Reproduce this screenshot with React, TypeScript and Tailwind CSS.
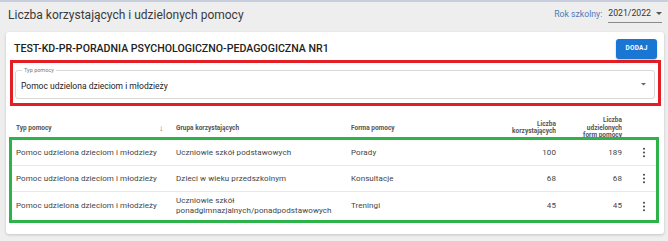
import React from "react";

interface Row {
  id: number;
  typ: string;
  grupa: string[];
  forma: string;
  korzystajacych: number;
  udzielonych: number;
  height: string;
}

const rows: Row[] = [
  { id: 1, typ: "Pomoc udzielona dzieciom i młodzieży", grupa: ["Uczniowie szkół podstawowych"], forma: "Porady", korzystajacych: 100, udzielonych: 189, height: "h-[26px]" },
  { id: 2, typ: "Pomoc udzielona dzieciom i młodzieży", grupa: ["Dzieci w wieku przedszkolnym"], forma: "Konsultacje", korzystajacych: 68, udzielonych: 68, height: "h-[26px]" },
  { id: 3, typ: "Pomoc udzielona dzieciom i młodzieży", grupa: ["Uczniowie szkół", "ponadgimnazjalnych/ponadpodstawowych"], forma: "Treningi", korzystajacych: 45, udzielonych: 45, height: "h-[28px]" },
];

const cols = "grid grid-cols-[160px_175px_143px_70px_66px_30px]";

function Caret({ className }: { className?: string }) {
  return (
    <svg viewBox="0 0 10 5" className={className}>
      <path d="M0 0 L10 0 L5 5 Z" fill="currentColor" />
    </svg>
  );
}

function Kebab() {
  return (
    <svg viewBox="0 0 4 11" className="w-[4px] h-[11px]">
      <circle cx="2" cy="1.8" r="1.05" fill="#4a4a4a" />
      <circle cx="2" cy="5.5" r="1.05" fill="#4a4a4a" />
      <circle cx="2" cy="9.2" r="1.05" fill="#4a4a4a" />
    </svg>
  );
}

export default function App() {
  return (
    <div className="w-[668px] h-[241px] overflow-hidden bg-[#eeeeee] border-t-2 border-[#c7cfdf] font-['Roboto',sans-serif]">
      {/* Page header */}
      <div className="h-[30px] flex items-center justify-between pl-2 pr-[6px] pb-[4px]">
        <h1 className="text-[12px] text-[#3a3a3a]">Liczba korzystających i udzielonych pomocy</h1>
        <div className="flex items-center gap-[6px] text-[8.7px]">
          <span className="text-[#4f7cba]">Rok szkolny:</span>
          <div className="flex items-center gap-[5px] border-b border-[#8a8a8a] pb-[1px] text-[#333]">
            <span>2021/2022</span>
            <Caret className="w-[6px] h-[3px] text-[#555]" />
          </div>
        </div>
      </div>

      {/* Card */}
      <div className="ml-[6px] w-[658px] h-[202px] bg-white rounded-[3px] shadow-[0_1px_3px_rgba(0,0,0,0.18)]">
        <div className="pt-[7px] pl-[8px] pr-[7px] h-[27px] flex items-center justify-between">
          <h2 className="text-[10.6px] font-medium text-[#222]">
            TEST-KD-PR-PORADNIA PSYCHOLOGICZNO-PEDAGOGICZNA NR1
          </h2>
          <button className="w-[41px] h-[20px] rounded-[3px] bg-[#1976d2] text-white text-[6.5px] font-bold tracking-[0.04em] shadow-[0_1px_2px_rgba(0,0,0,0.25)]">
            DODAJ
          </button>
        </div>

        {/* Filter (red outline) */}
        <div className="mt-[1px] ml-[4px] mr-[3px] border-[3px] border-[#e31e25] pt-[7px] pb-[4px] pl-[2px] pr-[3px]">
          <div className="relative h-[29px] border border-[#d8d8d8] rounded-[3px] flex items-center justify-between pl-[5px] pr-[8px] pt-[3px]">
            <span className="absolute -top-[4px] left-[6px] bg-white px-[2px] text-[5.5px] leading-[7px] text-[#777]">Typ pomocy</span>
            <span className="text-[8.5px] text-[#222]">Pomoc udzielona dzieciom i młodzieży</span>
            <Caret className="w-[5px] h-[2.5px] text-[#666] -mt-[3px]" />
          </div>
        </div>

        {/* Table header */}
        <div className="ml-[3px] mr-[5px] border-x-[3px] border-transparent h-[31px] pt-[11px]">
          <div className={`${cols} h-[21px] items-center text-[6.5px] leading-[7.5px] font-bold text-[#555]`}>
            <div className="flex items-center justify-between pl-[4px] pr-[9px]">
              <span>Typ pomocy</span>
              <span className="text-[8px] font-normal text-[#666]">↓</span>
            </div>
            <div className="pl-[4px]">Grupa korzystających</div>
            <div className="pl-[4px]">Forma pomocy</div>
            <div className="pr-[4px] text-right">Liczba<br />korzystających</div>
            <div className="pr-[4px] text-right">Liczba<br />udzielonych<br />form pomocy</div>
            <div />
          </div>
        </div>

        {/* Rows (green outline) */}
        <div className="relative bg-white ml-[3px] mr-[5px] border-[3px] border-[#2cb34a]">
          {rows.map((r, i) => (
            <div
              key={r.id}
              className={`${cols} ${r.height} items-center text-[8px] text-[#444] tracking-[0.01em] ${i < rows.length - 1 ? "border-b border-[#e8e8e8]" : ""}`}
            >
              <div className="pl-[4px]">{r.typ}</div>
              <div className="pl-[4px] leading-[10px]">
                {r.grupa.map((g) => (
                  <div key={g}>{g}</div>
                ))}
              </div>
              <div className="pl-[4px]">{r.forma}</div>
              <div className="pr-[4px] text-right">{r.korzystajacych}</div>
              <div className="pr-[4px] text-right">{r.udzielonych}</div>
              <div className="flex justify-center pl-[6px]">
                <Kebab />
              </div>
            </div>
          ))}
        </div>
      </div>
    </div>
  );
}
